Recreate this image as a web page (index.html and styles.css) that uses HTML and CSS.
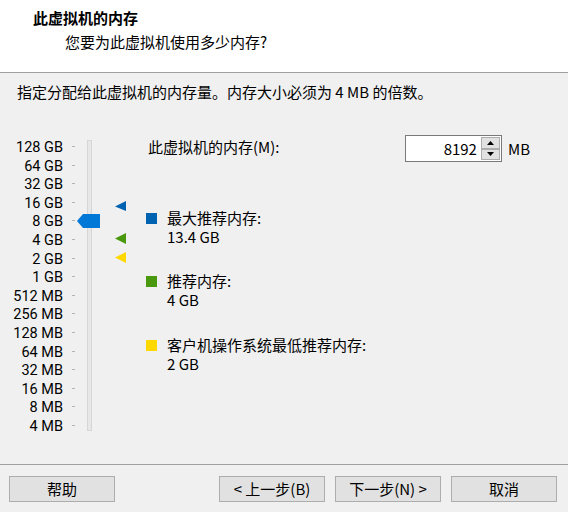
FILE: index.html
```html
<!DOCTYPE html>
<html lang="zh-CN">
<head>
<meta charset="utf-8">
<link rel="stylesheet" href="styles.css">
</head>
<body>
<div class="wizard">
  <header class="head">
    <div class="title">此虚拟机的内存</div>
    <div class="subtitle">您要为此虚拟机使用多少内存?</div>
  </header>
  <main class="main">
    <p class="desc">指定分配给此虚拟机的内存量。内存大小必须为 4 MB 的倍数。</p>
    <div class="content">
      <div class="slider">
        <ul class="labels">
          <li>128 GB</li><li>64 GB</li><li>32 GB</li><li>16 GB</li>
          <li>8 GB</li><li>4 GB</li><li>2 GB</li><li>1 GB</li>
          <li>512 MB</li><li>256 MB</li><li>128 MB</li><li>64 MB</li>
          <li>32 MB</li><li>16 MB</li><li>8 MB</li><li>4 MB</li>
        </ul>
        <ul class="ticks">
          <li></li><li></li><li></li><li></li><li></li><li></li><li></li><li></li>
          <li></li><li></li><li></li><li></li><li></li><li></li><li></li><li></li>
        </ul>
        <div class="track"></div>
        <svg class="thumb" style="top:76.6px" width="23" height="14" viewBox="0 0 23 14"><polygon points="0,7 6,0 23,0 23,14 6,14" fill="#0078d7"/></svg>
        <svg class="marker" style="top:63.5px" width="11" height="10" viewBox="0 0 11 10"><polygon points="0,5.5 11,0 11,10" fill="#0063b1"/></svg>
        <svg class="marker" style="top:96px" width="11" height="11" viewBox="0 0 11 11"><polygon points="0,5.5 11,0 11,11" fill="#4a980d"/></svg>
        <svg class="marker" style="top:115px" width="11" height="11" viewBox="0 0 11 11"><polygon points="0,5.5 11,0 11,11" fill="#ffd800"/></svg>
      </div>
      <div class="info">
        <div class="mem-row">
          <span class="mem-label">此虚拟机的内存(M):</span>
          <div class="spin">
            <div class="spin-input">8192</div>
            <div class="spin-btns">
              <div class="spin-btn"><svg width="7" height="4" viewBox="0 0 7 4"><polygon points="0,4 3.5,0 7,4" fill="#000"/></svg></div>
              <div class="spin-btn"><svg width="7" height="4" viewBox="0 0 7 4"><polygon points="0,0 7,0 3.5,4" fill="#000"/></svg></div>
            </div>
            <span class="unit">MB</span>
          </div>
        </div>
        <div class="legend">
          <div class="item"><span class="sq sq-blue"></span><div class="txt"><div>最大推荐内存:</div><div>13.4 GB</div></div></div>
          <div class="item"><span class="sq sq-green"></span><div class="txt"><div>推荐内存:</div><div>4 GB</div></div></div>
          <div class="item"><span class="sq sq-yellow"></span><div class="txt"><div>客户机操作系统最低推荐内存:</div><div>2 GB</div></div></div>
        </div>
      </div>
    </div>
  </main>
  <footer class="foot">
    <button class="btn">帮助</button>
    <div class="nav">
      <button class="btn">&lt; 上一步(B)</button>
      <button class="btn">下一步(N) &gt;</button>
      <button class="btn btn-cancel">取消</button>
    </div>
  </footer>
</div>
</body>
</html>
```
FILE: styles.css
```css
* { box-sizing: border-box; }
html, body { margin: 0; padding: 0; }
body {
  width: 568px;
  height: 512px;
  background: #f0f0f0;
  font-family: "Noto Sans CJK SC", "Noto Sans", sans-serif;
  font-size: 15px;
  color: #000;
  overflow: hidden;
}
.wizard { display: flex; flex-direction: column; height: 512px; }
.head {
  background: #fff;
  height: 73px;
  border-bottom: 1px solid #a0a0a0;
  padding: 8px 0 0 33px;
}
.title { font-weight: bold; line-height: 20px; }
.subtitle { line-height: 20px; margin: 4px 0 0 32px; }
.main { flex: 1; }
.desc { margin: 9px 0 0 17px; line-height: 20px; }
.content { display: flex; margin-top: 35px; }
.slider { position: relative; display: flex; width: 140px; height: 300px; }
.labels, .ticks { list-style: none; margin: 0; padding: 0; }
.labels {
  width: 63px; text-align: right; padding-top: 2px;
  font-family: Roboto, "Noto Sans", sans-serif; font-size: 14.5px;
}
.labels li { height: 18.6px; line-height: 18.6px; white-space: nowrap; }
.ticks { width: 3px; margin-left: 9px; }
.ticks li { height: 18.6px; position: relative; }
.ticks li::after {
  content: ""; position: absolute; left: 0; top: 9px; width: 3px; height: 1px; background: #b4b4b4;
}
.track {
  margin: 3px 0 0 12px;
  width: 5px; height: 291px;
  background: #e7e7e7;
  border: 1px solid #d6d6d6;
}
.thumb { position: absolute; left: 77px; }
.marker { position: absolute; left: 115px; }
.info { margin-left: 6px; width: 384px; }
.mem-row { display: flex; align-items: center; justify-content: space-between; height: 27px; margin-top: -2px; }
.mem-label { margin-left: 2px; line-height: 20px; padding-bottom: 3px; }
.spin { display: flex; align-items: center; }
.spin-input {
  width: 76px; height: 27px;
  background: #fff; border: 1px solid #7a7a7a; border-right: none;
  text-align: right; padding-right: 4px; line-height: 25px;
}
.spin-btns {
  display: flex; flex-direction: column; justify-content: space-between;
  width: 21px; height: 27px; border: 1px solid #7a7a7a; border-left: none;
  background: #fff; padding: 1px 1px 1px 0;
}
.spin-btn {
  height: 12px; background: #e1e1e1; border: 1px solid #adadad;
  display: flex; align-items: center; justify-content: center;
}
.unit { margin-left: 6px; }
.legend { margin-top: 46px; display: flex; flex-direction: column; gap: 25.4px; }
.item { display: flex; align-items: flex-start; }
.sq { width: 11px; height: 11px; margin: 5px 10px 0 0; flex: none; }
.sq-blue { background: #0063b1; }
.sq-green { background: #4a980d; }
.sq-yellow { background: #ffd800; }
.txt { line-height: 19px; }
.foot {
  height: 48px;
  border-top: 1px solid #a0a0a0;
  display: flex; justify-content: space-between;
  padding: 11px 11px 0 9px;
}
.nav { display: flex; gap: 10px; }
.btn {
  width: 106px; height: 26px;
  background: #e1e1e1; border: 1px solid #adadad;
  font: inherit; font-size: 15px; color: #000;
  padding: 0; line-height: 24px;
}
```
